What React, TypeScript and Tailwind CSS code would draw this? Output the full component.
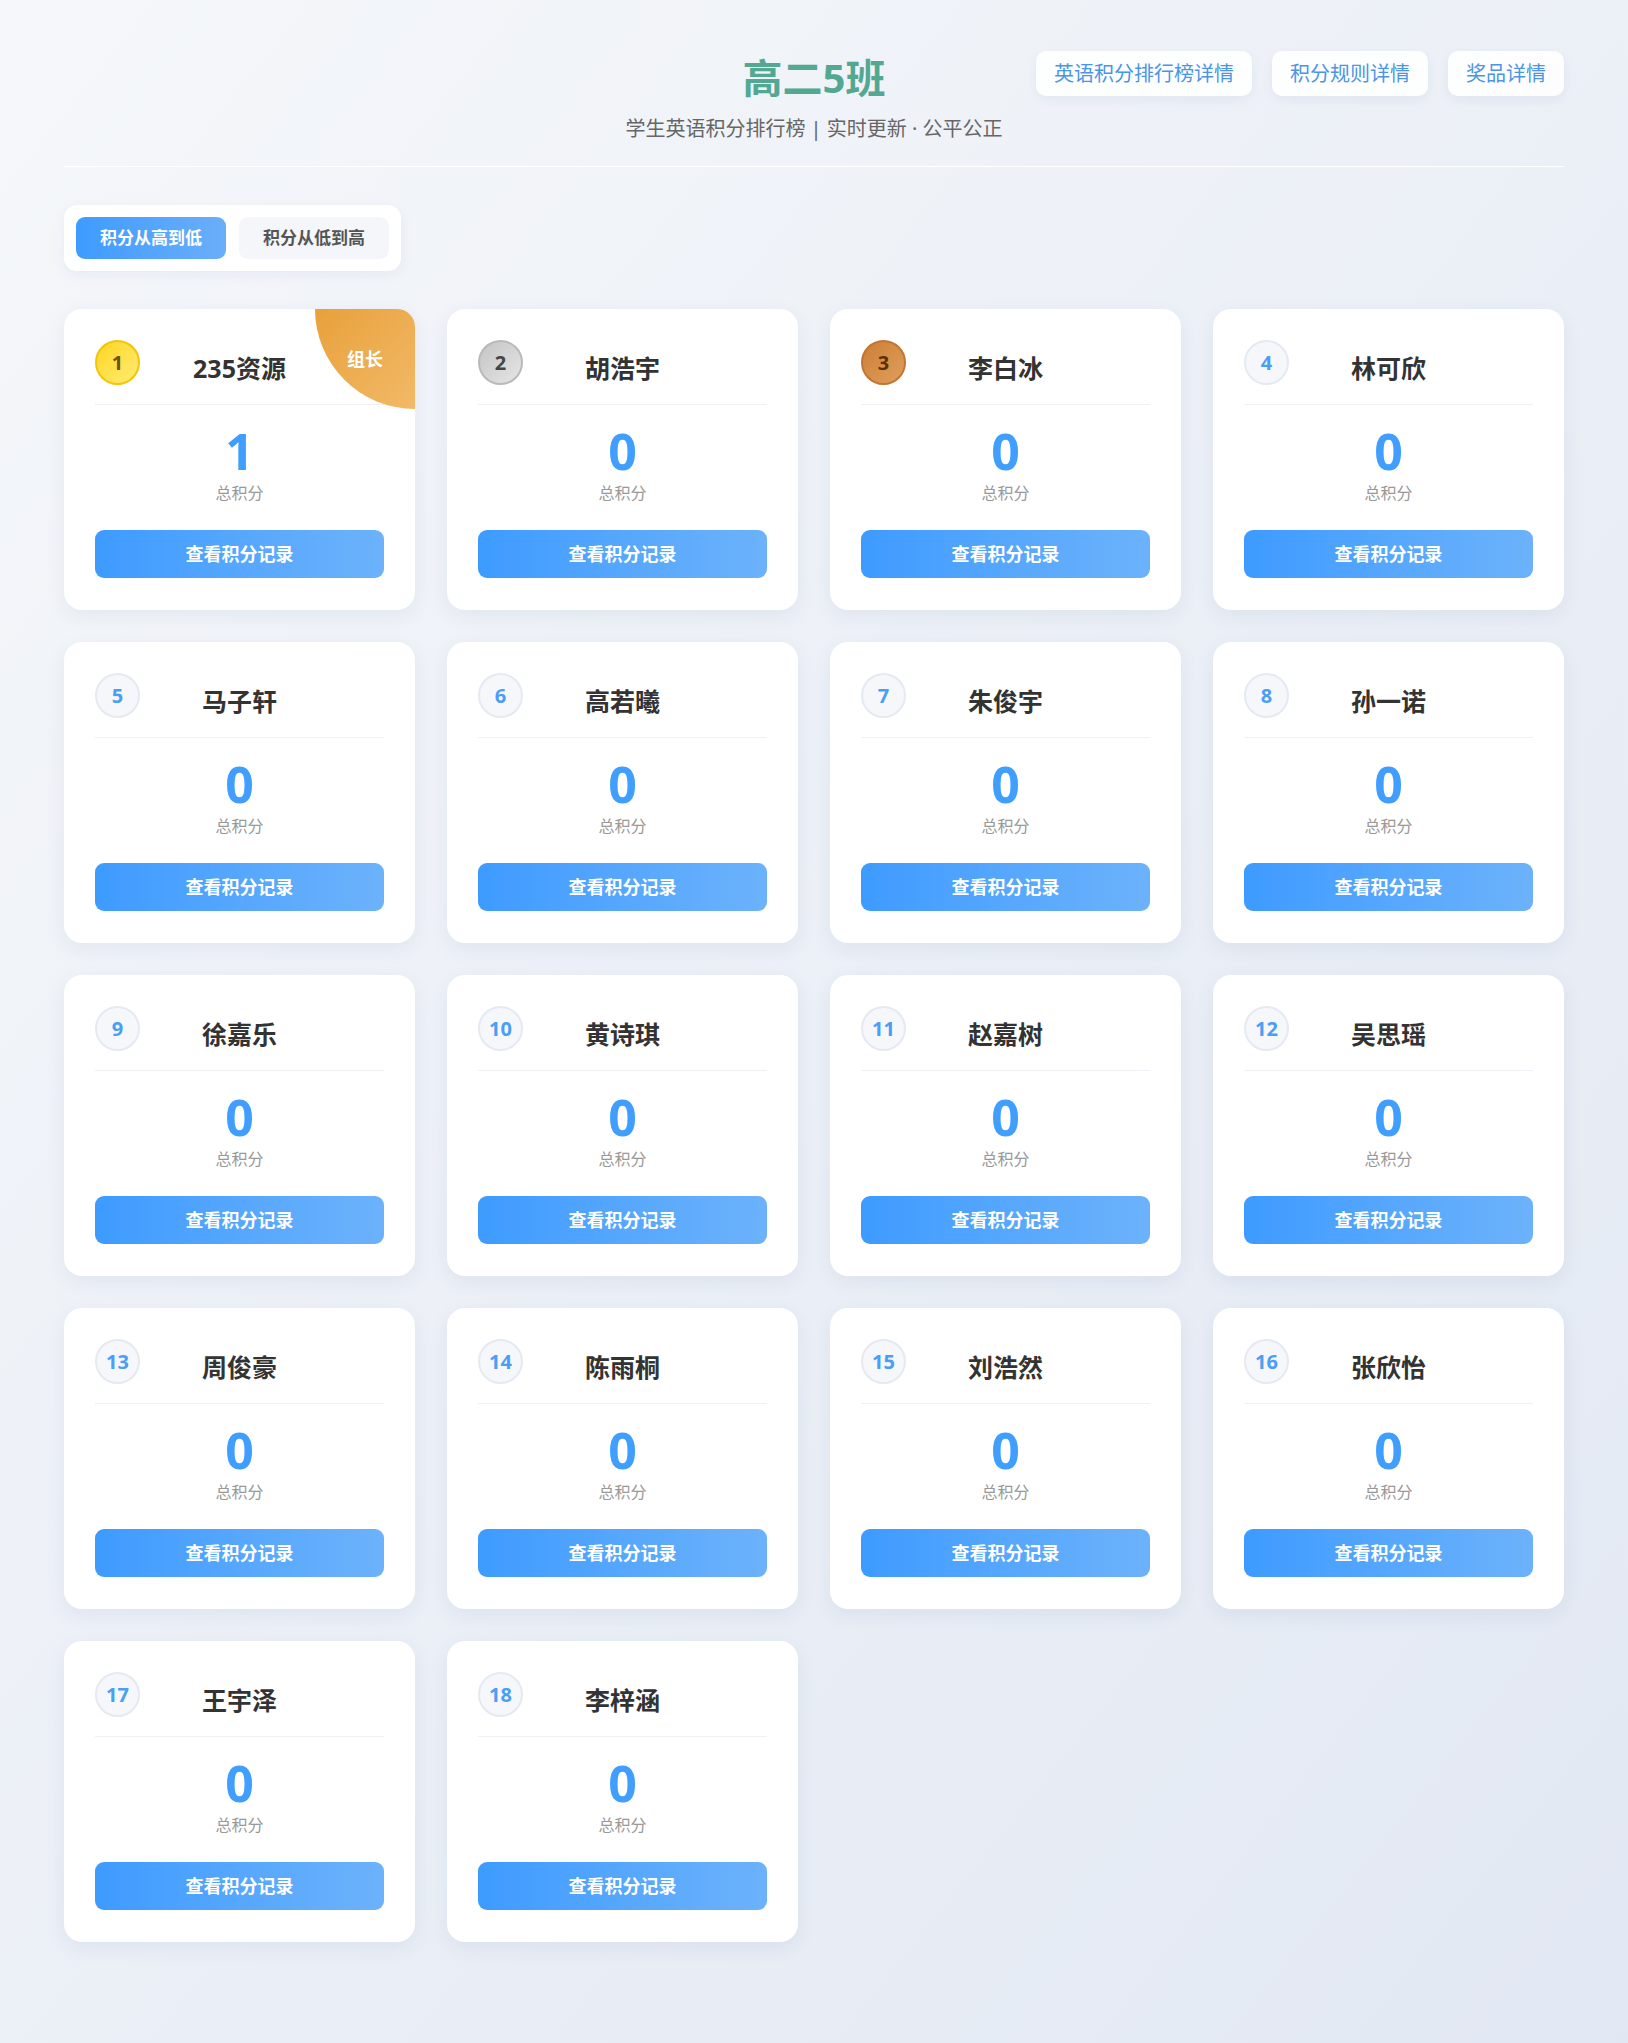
import React from "react";

interface Student {
  rank: number;
  name: string;
  score: number;
  leader?: boolean;
}

const students: Student[] = [
  { rank: 1, name: "235资源", score: 1, leader: true },
  { rank: 2, name: "胡浩宇", score: 0 },
  { rank: 3, name: "李白冰", score: 0 },
  { rank: 4, name: "林可欣", score: 0 },
  { rank: 5, name: "马子轩", score: 0 },
  { rank: 6, name: "高若曦", score: 0 },
  { rank: 7, name: "朱俊宇", score: 0 },
  { rank: 8, name: "孙一诺", score: 0 },
  { rank: 9, name: "徐嘉乐", score: 0 },
  { rank: 10, name: "黄诗琪", score: 0 },
  { rank: 11, name: "赵嘉树", score: 0 },
  { rank: 12, name: "吴思瑶", score: 0 },
  { rank: 13, name: "周俊豪", score: 0 },
  { rank: 14, name: "陈雨桐", score: 0 },
  { rank: 15, name: "刘浩然", score: 0 },
  { rank: 16, name: "张欣怡", score: 0 },
  { rank: 17, name: "王宇泽", score: 0 },
  { rank: 18, name: "李梓涵", score: 0 },
];

// 名次徽章颜色：前三名金银铜，其余为浅色
const badgeClass = (rank: number) => {
  if (rank === 1)
    return "bg-linear-to-br from-[#ffd60a] to-[#ffec6e] border-[#f2c40c] text-[#6e5500]";
  if (rank === 2)
    return "bg-linear-to-br from-[#c4c4c4] to-[#e6e6e6] border-[#b9b9b9] text-[#454545]";
  if (rank === 3)
    return "bg-linear-to-br from-[#cd7f35] to-[#df9f5c] border-[#c27534] text-[#5a3205]";
  return "bg-[#f5f7fb] border-[#e5e9f1] text-[#4a9ef5]";
};

const StudentCard: React.FC<{ student: Student }> = ({ student }) => (
  <div className="relative overflow-hidden rounded-[18px] bg-white px-[31px] pt-[31px] pb-[32px] shadow-[0_6px_20px_rgba(40,70,130,0.07)]">
    {student.leader && (
      <div className="absolute right-0 top-0 flex h-[100px] w-[100px] items-center justify-center rounded-bl-full bg-linear-to-br from-[#e8a13a] to-[#f2b966] text-[18px] font-bold text-white">
        组长
      </div>
    )}
    <div className="flex items-start border-b border-[#eef1f5] pb-[18px]">
      <div
        className={`flex h-[45px] w-[45px] shrink-0 items-center justify-center rounded-full border-2 text-[20px] font-bold ${badgeClass(
          student.rank
        )}`}
      >
        {student.rank}
      </div>
      <div className="mt-[10px] flex-1 text-center text-[25px] font-bold leading-[36px] text-[#333]">
        {student.name}
      </div>
      <div className="w-[45px] shrink-0" />
    </div>
    <div className="mt-[16px] text-center text-[50px] font-bold leading-[60px] text-[#409eff]">
      {student.score}
    </div>
    <div className="text-center text-[16px] leading-6 text-[#999]">总积分</div>
    <button className="mt-[25px] h-[48px] w-full rounded-[9px] bg-linear-to-r from-[#3d9bff] to-[#6cb2fb] text-[18px] font-bold text-white">
      查看积分记录
    </button>
  </div>
);

export default function App() {
  return (
    <div className="min-h-screen bg-linear-to-br from-[#f5f7fa] to-[#e2e8f3] font-['Noto_Sans','Noto_Sans_CJK_SC',sans-serif]">
      <div className="mx-auto max-w-[1500px] pt-[51px] pb-[100px]">
        <header className="mb-[38px] grid grid-cols-[1fr_auto_1fr] items-start border-b border-white pb-[22px]">
          <div />
          <div className="text-center">
            <h1 className="mt-[3px] text-[40px] font-bold leading-[48px] text-[#53a892]">
              高二5班
            </h1>
            <p className="mt-[12px] text-[20px] leading-[30px] text-[#666]">
              学生英语积分排行榜 | 实时更新 · 公平公正
            </p>
          </div>
          <div className="flex justify-end gap-5">
            <button className="rounded-[10px] bg-white/90 px-[18px] py-[7px] text-[20px] leading-[31px] text-[#4b95e6] shadow-[0_4px_12px_rgba(40,70,130,0.06)]">
              英语积分排行榜详情
            </button>
            <button className="rounded-[10px] bg-white/90 px-[18px] py-[7px] text-[20px] leading-[31px] text-[#4b95e6] shadow-[0_4px_12px_rgba(40,70,130,0.06)]">
              积分规则详情
            </button>
            <button className="rounded-[10px] bg-white/90 px-[18px] py-[7px] text-[20px] leading-[31px] text-[#4b95e6] shadow-[0_4px_12px_rgba(40,70,130,0.06)]">
              奖品详情
            </button>
          </div>
        </header>

        <div className="mb-[38px] inline-flex gap-[13px] rounded-[13px] bg-white p-[12px] shadow-[0_4px_14px_rgba(40,70,130,0.06)]">
          <button className="h-[42px] w-[150px] rounded-[9px] bg-linear-to-r from-[#3d9bff] to-[#6aaefa] text-[17px] font-bold text-white">
            积分从高到低
          </button>
          <button className="h-[42px] w-[150px] rounded-[9px] bg-[#f4f6f9] text-[17px] font-bold text-[#555]">
            积分从低到高
          </button>
        </div>

        <div className="grid grid-cols-4 gap-8">
          {students.map((s) => (
            <StudentCard key={s.rank} student={s} />
          ))}
        </div>
      </div>
    </div>
  );
}
